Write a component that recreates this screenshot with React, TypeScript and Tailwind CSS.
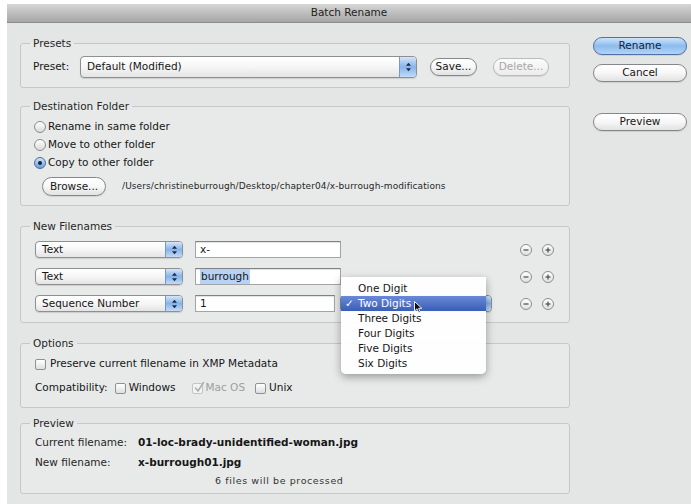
import React from "react";

/* Aqua-style pop-up button: light face, blue stepper cap on the right */
function PopUp({ label, className = "" }: { label?: string; className?: string }) {
  return (
    <div
      className={`flex items-stretch overflow-hidden rounded-[4px] border border-[#8d8f91] bg-linear-to-b from-white via-[#f6f6f6] to-[#e4e4e4] shadow-[0_1px_1px_rgba(0,0,0,0.12)] ${className}`}
    >
      <div className="flex flex-1 items-center pl-[6px] text-[#161616]">{label}</div>
      <div className="flex w-[17px] items-center justify-center border-l border-[#7d98bf] bg-linear-to-b from-[#d6e6f9] via-[#86b3ea] to-[#c3dbf5]">
        <svg width="7" height="10" viewBox="0 0 7 10">
          <path d="M3.5 0.8 L6 3.8 L1 3.8 Z" fill="#1d2940" />
          <path d="M1 6.2 L6 6.2 L3.5 9.2 Z" fill="#1d2940" />
        </svg>
      </div>
    </div>
  );
}

function PillButton({
  children,
  className = "",
  primary = false,
  disabled = false,
}: {
  children: React.ReactNode;
  className?: string;
  primary?: boolean;
  disabled?: boolean;
}) {
  const face = primary
    ? "border-[#4f72a3] bg-linear-to-b from-[#cfe4fb] via-[#8bbcee] to-[#b3d4f6] text-[#14233a]"
    : disabled
    ? "border-[#b9bbbc] bg-linear-to-b from-[#fbfbfb] to-[#ececec] text-[#a6a8a9]"
    : "border-[#85878a] bg-linear-to-b from-white via-[#f7f7f7] to-[#e2e2e2] text-[#161616]";
  return (
    <div
      className={`flex h-[18px] items-center justify-center rounded-full border shadow-[0_1px_1px_rgba(0,0,0,0.1)] ${face} ${className}`}
    >
      {children}
    </div>
  );
}

function Radio({ on = false }: { on?: boolean }) {
  if (on) {
    return (
      <div className="flex h-[12px] w-[12px] items-center justify-center rounded-full border border-[#4b6c9c] bg-linear-to-b from-[#cfe3f9] to-[#6b9fdc]">
        <div className="h-[4px] w-[4px] rounded-full bg-[#17253a]" />
      </div>
    );
  }
  return <div className="h-[12px] w-[12px] rounded-full border border-[#8a8c8e] bg-linear-to-b from-white to-[#dadada]" />;
}

function Check({ dimmed = false }: { dimmed?: boolean }) {
  if (dimmed) {
    return (
      <div className="relative h-[11px] w-[11px] rounded-[2px] border border-[#c3c5c6] bg-[#f2f3f3]">
        <svg className="absolute -top-[3px] left-[1px]" width="11" height="12" viewBox="0 0 11 12">
          <path d="M1.5 7 L4 10 L9.5 1.5" fill="none" stroke="#a9abad" strokeWidth="1.4" strokeLinecap="round" />
        </svg>
      </div>
    );
  }
  return <div className="h-[11px] w-[11px] rounded-[2px] border border-[#8e9092] bg-linear-to-b from-white to-[#dedede]" />;
}

function RoundIcon({ plus = false }: { plus?: boolean }) {
  return (
    <div className="flex h-[12px] w-[12px] items-center justify-center rounded-full border border-[#8b8d8f] bg-linear-to-b from-white to-[#e0e0e0]">
      <svg width="8" height="8" viewBox="0 0 8 8">
        <path d="M1.5 4 H6.5" stroke="#4a4a4a" strokeWidth="1.2" />
        {plus && <path d="M4 1.5 V6.5" stroke="#4a4a4a" strokeWidth="1.2" />}
      </svg>
    </div>
  );
}

function Field({ children, className = "" }: { children?: React.ReactNode; className?: string }) {
  return (
    <div
      className={`flex h-[17px] items-center border border-[#a2a4a6] border-t-[#7f8183] bg-white px-[4px] shadow-[inset_0_1px_1px_rgba(0,0,0,0.12)] ${className}`}
    >
      {children}
    </div>
  );
}

function Group({ title, className = "", children }: { title: string; className?: string; children: React.ReactNode }) {
  return (
    <fieldset className={`rounded-[3px] border border-[#c6c8c8] bg-[#e8eaea] ${className}`}>
      <legend className="ml-[9px] px-[3px] text-[10.5px] leading-[12px] text-[#262626]">{title}</legend>
      {children}
    </fieldset>
  );
}

const digitOptions = ["One Digit", "Two Digits", "Three Digits", "Four Digits", "Five Digits", "Six Digits"];

export default function App() {
  return (
    <div className="relative h-[504px] w-[691px] overflow-hidden bg-white font-['DejaVu_Sans',sans-serif] text-[10.5px] text-[#161616]">
      <div className="ml-[7px] mt-[4px] flex h-[500px] w-[684px] flex-col bg-[#e4e6e5]">
        {/* title bar */}
        <div className="flex h-[19px] items-center justify-center border-b border-[#8c8c8c] bg-linear-to-b from-[#d6d6d6] to-[#a6a6a6] text-[10.5px] text-[#222]">
          Batch Rename
        </div>

        <div className="flex pl-[13px] pt-[14px]">
          {/* left column: grouped settings */}
          <div className="flex w-[550px] flex-col">
            <Group title="Presets" className="h-[51px]">
              <div className="flex items-center px-[12px] pt-[7px]">
                <span className="w-[47px]">Preset:</span>
                <PopUp label="Default (Modified)" className="h-[22px] w-[337px]" />
                <PillButton className="ml-[13px] w-[47px]">Save...</PillButton>
                <PillButton disabled className="ml-[16px] w-[56px]">Delete...</PillButton>
              </div>
            </Group>

            <Group title="Destination Folder" className="mt-[12px] h-[106px]">
              <div className="flex flex-col px-[13px] pt-[6px]">
                {[
                  ["Rename in same folder", false],
                  ["Move to other folder", false],
                  ["Copy to other folder", true],
                ].map(([label, on]) => (
                  <div key={label as string} className="flex h-[18px] items-center gap-[2px]">
                    <Radio on={on as boolean} />
                    <span>{label as string}</span>
                  </div>
                ))}
                <div className="mt-[5px] flex items-center">
                  <PillButton className="ml-[8px] h-[19px] w-[64px]">Browse...</PillButton>
                  <span className="ml-[16px] text-[9px] tracking-[0.1px] text-[#262626]">
                    /Users/christineburrough/Desktop/chapter04/x-burrough-modifications
                  </span>
                </div>
              </div>
            </Group>

            <Group title="New Filenames" className="mt-[14px] h-[103px]">
              <div className="flex flex-col gap-[10px] px-[14px] pt-[9px]">
                <div className="flex items-center">
                  <PopUp label="Text" className="h-[17px] w-[148px]" />
                  <Field className="ml-[12px] w-[146px]">x-</Field>
                  <div className="ml-auto mr-[1px] flex gap-[10px]">
                    <RoundIcon />
                    <RoundIcon plus />
                  </div>
                </div>
                <div className="flex items-center">
                  <PopUp label="Text" className="h-[17px] w-[148px]" />
                  <Field className="ml-[12px] w-[146px]">
                    <span className="bg-[#b6d2f5] px-[1px]">burrough</span>
                  </Field>
                  <div className="ml-auto mr-[1px] flex gap-[10px]">
                    <RoundIcon />
                    <RoundIcon plus />
                  </div>
                </div>
                <div className="flex items-center">
                  <PopUp label="Sequence Number" className="h-[17px] w-[148px]" />
                  <Field className="ml-[12px] w-[140px]">1</Field>
                  {/* digits pop-up; its label is hidden behind the open menu */}
                  <PopUp className="ml-[5px] h-[17px] w-[152px]" />
                  <div className="ml-auto mr-[1px] flex gap-[10px]">
                    <RoundIcon />
                    <RoundIcon plus />
                  </div>
                </div>
              </div>
            </Group>

            <Group title="Options" className="mt-[14px] h-[71px]">
              <div className="flex flex-col gap-[8px] px-[14px] pt-[7px]">
                <div className="flex h-[16px] items-center gap-[4px]">
                  <Check />
                  <span>Preserve current filename in XMP Metadata</span>
                </div>
                <div className="flex h-[16px] items-center">
                  <span>Compatibility:</span>
                  <div className="ml-[7px]">
                    <Check />
                  </div>
                  <span className="ml-[3px]">Windows</span>
                  <div className="ml-[16px]">
                    <Check dimmed />
                  </div>
                  <span className="ml-[3px] text-[#9c9ea0]">Mac OS</span>
                  <div className="ml-[10px]">
                    <Check />
                  </div>
                  <span className="ml-[3px]">Unix</span>
                </div>
              </div>
            </Group>

            <Group title="Preview" className="mt-[9px] h-[77px]">
              <div className="flex flex-col px-[14px] pt-[6px]">
                <div className="flex h-[16px] items-center">
                  <span className="w-[103px] text-[#262626]">Current filename:</span>
                  <span className="font-bold">01-loc-brady-unidentified-woman.jpg</span>
                </div>
                <div className="mt-[4px] flex h-[16px] items-center">
                  <span className="w-[103px] text-[#262626]">New filename:</span>
                  <span className="font-bold">x-burrough01.jpg</span>
                </div>
                <div className="mt-[3px] flex h-[14px] items-center pl-[180px] text-[9.5px] tracking-[0.6px] text-[#333]">
                  6 files will be processed
                </div>
              </div>
            </Group>
          </div>

          {/* right column: dialog buttons */}
          <div className="ml-[23px] flex w-[94px] flex-col">
            <PillButton primary>Rename</PillButton>
            <PillButton className="mt-[9px]">Cancel</PillButton>
            <PillButton className="mt-[31px]">Preview</PillButton>
          </div>
        </div>
      </div>

      {/* open digits menu */}
      <div className="absolute left-[341px] top-[277px] w-[145px] rounded-b-[5px] bg-white/95 pb-[3px] pt-[4px] shadow-[0_3px_8px_rgba(0,0,0,0.35)]">
        {digitOptions.map((opt, i) =>
          i === 1 ? (
            <div
              key={opt}
              className="relative flex h-[15px] items-center bg-linear-to-b from-[#6a8ad6] to-[#3a5db8] pl-[17px] text-white"
            >
              <span className="absolute left-[4px]">✓</span>
              {opt}
            </div>
          ) : (
            <div key={opt} className="flex h-[15px] items-center pl-[17px] text-[#161616]">
              {opt}
            </div>
          )
        )}
      </div>

      {/* mouse pointer */}
      <svg className="absolute left-[414px] top-[301px]" width="9" height="13" viewBox="0 0 9 13">
        <path d="M0.5 0.5 L0.5 10 L3 7.8 L4.8 11.8 L6.3 11.1 L4.6 7.3 L7.8 7.3 Z" fill="#111" stroke="#fff" strokeWidth="0.9" />
      </svg>
    </div>
  );
}
